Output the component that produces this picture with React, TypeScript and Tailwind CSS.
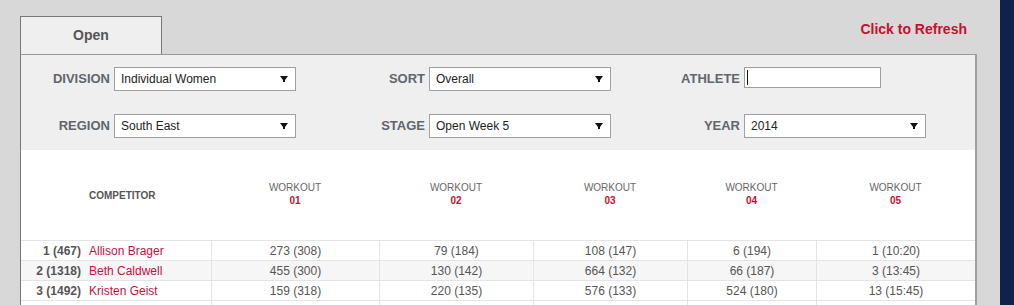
import React from "react";

interface Row {
  rank: string;
  name: string;
  scores: string[];
}

const ROWS: Row[] = [
  { rank: "1 (467)", name: "Allison Brager", scores: ["273 (308)", "79 (184)", "108 (147)", "6 (194)", "1 (10:20)"] },
  { rank: "2 (1318)", name: "Beth Caldwell", scores: ["455 (300)", "130 (142)", "664 (132)", "66 (187)", "3 (13:45)"] },
  { rank: "3 (1492)", name: "Kristen Geist", scores: ["159 (318)", "220 (135)", "576 (133)", "524 (180)", "13 (15:45)"] },
];

const GRID = "grid grid-cols-[190px_168px_154px_154px_129px_159px]";

function Arrow() {
  return (
    <svg width="8" height="8" viewBox="0 0 8 8" className="shrink-0">
      <polygon points="0,1 8,1 5,5 5,7 3,7 3,5" fill="#111" />
    </svg>
  );
}

function Select({ value, width }: { value: string; width: string }) {
  return (
    <div
      className={`${width} h-[24px] bg-white border border-[#a0a0a0] flex items-center justify-between pl-[6px] pr-[7px] text-[12px] text-[#222]`}
    >
      <span>{value}</span>
      <Arrow />
    </div>
  );
}

function Label({ text, width }: { text: string; width: string }) {
  return (
    <div className={`${width} pr-[4px] text-right text-[13px] font-bold text-[#61656c]`}>{text}</div>
  );
}

export default function App() {
  return (
    <div
      className="flex h-[305px] w-[1014px] overflow-hidden bg-[#d8d8d8]"
      style={{ fontFamily: '"Liberation Sans", Arial, sans-serif' }}
    >
      <div className="w-[1000px] pl-[20px]">
        {/* Tab strip */}
        <div className="flex h-[54px] w-[957px] justify-between">
          <div className="mt-[16px] flex h-[38px] w-[142px] items-center justify-center border-l border-r border-t border-[#777] bg-[#efefef] text-[14px] font-bold text-[#555]">
            Open
          </div>
          <div className="mr-[10px] mt-[21px] h-[16px] text-[14px] font-bold leading-[16px] text-[#c8102e]">
            Click to Refresh
          </div>
        </div>

        {/* Panel */}
        <div className="w-[957px] border-l border-r-2 border-t border-l-[#777] border-r-[#a0a0a0] border-t-[#999] bg-white">
          {/* Filters */}
          <div className="flex flex-col gap-[23px] bg-[#efefef] pb-[12px] pt-[12px]">
            <div className="flex items-center">
              <Label text="DIVISION" width="w-[93px]" />
              <Select value="Individual Women" width="w-[182px]" />
              <Label text="SORT" width="w-[133px]" />
              <Select value="Overall" width="w-[182px]" />
              <Label text="ATHLETE" width="w-[133px]" />
              <div className="flex h-[21px] w-[137px] items-center border border-[#a0a0a0] bg-white pl-[2px] self-start">
                <span className="h-[15px] w-px bg-[#111]" />
              </div>
            </div>
            <div className="flex items-center">
              <Label text="REGION" width="w-[93px]" />
              <Select value="South East" width="w-[182px]" />
              <Label text="STAGE" width="w-[133px]" />
              <Select value="Open Week 5" width="w-[182px]" />
              <Label text="YEAR" width="w-[133px]" />
              <Select value="2014" width="w-[182px]" />
            </div>
          </div>

          {/* Leaderboard */}
          <div className={`${GRID} h-[91px] border-b border-[#e4e4e4]`}>
            <div className="flex items-center pl-[68px] text-[10px] font-bold text-[#555]">COMPETITOR</div>
            {["01", "02", "03", "04", "05"].map((n) => (
              <div key={n} className="flex flex-col items-center justify-center pb-[3px] text-[10px] leading-[13px]">
                <span className="text-[#666]">WORKOUT</span>
                <span className="font-bold text-[#c8102e]">{n}</span>
              </div>
            ))}
          </div>
          {ROWS.map((row, i) => (
            <div
              key={row.rank}
              className={`${GRID} h-[20px] border-b border-[#e4e4e4] text-[12px] ${i % 2 === 1 ? "bg-[#f6f6f6]" : "bg-white"}`}
            >
              <div className="flex items-center gap-[8px]">
                <span className="w-[60px] text-right font-bold text-[#555]">{row.rank}</span>
                <span className="text-[#c41040]">{row.name}</span>
              </div>
              {row.scores.map((s, j) => (
                <div key={j} className="flex items-center justify-center border-l border-[#e4e4e4] text-[#555]">
                  {s}
                </div>
              ))}
            </div>
          ))}
          <div className={`${GRID} h-[20px] border-b border-[#e4e4e4] bg-white`}>
            <div />
            {[0, 1, 2, 3, 4].map((j) => (
              <div key={j} className="border-l border-[#e4e4e4]" />
            ))}
          </div>
        </div>
      </div>
      <div className="flex-1 bg-[#10224b]" />
    </div>
  );
}
